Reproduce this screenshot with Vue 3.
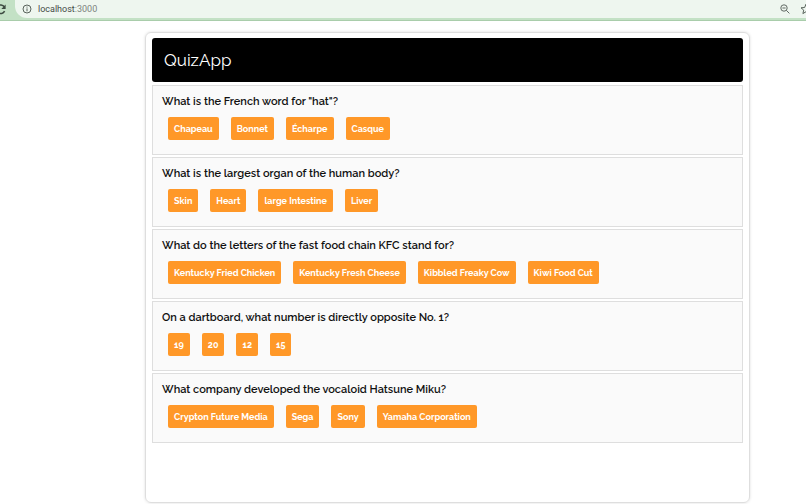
<template>
  <div class="page">
    <header class="browser">
      <button class="icon-button reload" aria-label="Reload">
        <svg width="12" height="14" viewBox="0 0 12 14">
          <path d="M9.6 9.2A4.3 4.3 0 1 1 9.3 4.8" fill="none" stroke="#3c4a40" stroke-width="1.5" />
          <path d="M10.6 2.6V6.9H6.4Z" fill="#3c4a40" />
        </svg>
      </button>
      <div class="address">
        <svg width="10" height="10" viewBox="0 0 10 10">
          <circle cx="5" cy="5" r="4" fill="none" stroke="#59635c" />
          <path d="M5 4.4V7.3M5 2.6V3.6" stroke="#59635c" />
        </svg>
        <span class="url">localhost<span class="port">:3000</span></span>
        <button class="icon-button zoom" aria-label="Zoom">
          <svg width="10" height="10" viewBox="0 0 10 10">
            <circle cx="4" cy="4" r="3.2" fill="none" stroke="#626b65" />
            <path d="M2.4 4H5.6M6.3 6.3L9.4 9.4" stroke="#626b65" />
          </svg>
        </button>
        <button class="icon-button star" aria-label="Bookmark">
          <svg width="12" height="12" viewBox="0 0 12 12">
            <path d="M6 1.2L7.4 4.5L11 4.8L8.3 7.1L9.1 10.6L6 8.7L2.9 10.6L3.7 7.1L1 4.8L4.6 4.5Z" fill="none" stroke="#59635c" />
          </svg>
        </button>
      </div>
    </header>

    <main class="container">
      <h1 class="title">QuizApp</h1>
      <section v-for="item in questions" :key="item.question" class="question">
        <h2 class="text">{{ item.question }}</h2>
        <div class="answers">
          <button
            v-for="answer in item.answers"
            :key="answer"
            class="answer"
            @click="select(item, answer)"
          >{{ answer }}</button>
        </div>
      </section>
    </main>
  </div>
</template>

<script setup>
import { ref } from 'vue';

const questions = ref([
  {
    question: 'What is the French word for "hat"?',
    answers: ['Chapeau', 'Bonnet', 'Écharpe', 'Casque'],
    selected: ''
  },
  {
    question: 'What is the largest organ of the human body?',
    answers: ['Skin', 'Heart', 'large Intestine', 'Liver'],
    selected: ''
  },
  {
    question: 'What do the letters of the fast food chain KFC stand for?',
    answers: ['Kentucky Fried Chicken', 'Kentucky Fresh Cheese', 'Kibbled Freaky Cow', 'Kiwi Food Cut'],
    selected: ''
  },
  {
    question: 'On a dartboard, what number is directly opposite No. 1?',
    answers: ['19', '20', '12', '15'],
    selected: ''
  },
  {
    question: 'What company developed the vocaloid Hatsune Miku?',
    answers: ['Crypton Future Media', 'Sega', 'Sony', 'Yamaha Corporation'],
    selected: ''
  }
]);

// remember the picked answer
const select = (item, answer) => {
  item.selected = answer;
};
</script>

<style>
body {
  margin: 0;
  background: #fff;
}
</style>

<style scoped>
* {
  box-sizing: border-box;
}
.page {
  display: flex;
  flex-direction: column;
  min-height: 100vh;
  overflow: hidden;
  font-family: Raleway, Lato, sans-serif;
}
.browser {
  display: flex;
  height: 21px;
  padding-bottom: 2px;
  background: #c3e1c5;
  border-bottom: 1px solid #a9cdab;
}
.icon-button {
  display: flex;
  flex: none;
  align-items: center;
  padding: 0;
  border: 0;
  background: none;
}
.reload {
  justify-content: flex-end;
  width: 15px;
  margin-left: -8px;
}
.address {
  display: flex;
  flex: 1;
  align-items: center;
  gap: 6px;
  min-width: 0;
  margin-left: 8px;
  padding-left: 7px;
  background: #eef6ef;
  border-radius: 0 0 0 12px;
}
.url {
  color: #444b46;
  font: 9px/12px Roboto, sans-serif;
}
.port {
  color: #7c847e;
}
.zoom {
  margin-left: auto;
}
.star {
  margin: 0 -6px 0 4px;
}
.container {
  display: flex;
  flex: 1;
  flex-direction: column;
  gap: 2px;
  width: 75%;
  margin: 11px 0 1px 18%;
  padding: 5px 6px;
  border: 1px solid #dedede;
  border-radius: 6px;
  box-shadow: 0 0 3px #ddd;
}
.title {
  margin: 0 0 1px;
  padding: 10px 12px;
  border-radius: 3px;
  background: #000;
  color: #fff;
  font-size: 17px;
  font-weight: 400;
  line-height: 24px;
}
.question {
  min-height: 70px;
  padding: 8px 9px;
  border: 1px solid #dedede;
  background: #fafafa;
}
.text {
  margin: 0;
  color: #111;
  font-size: 11px;
  font-weight: 600;
  line-height: 16px;
}
.answers {
  display: flex;
  flex-wrap: wrap;
  gap: 12px;
  padding: 7px 6px 0;
}
.answer {
  height: 23px;
  padding: 0 6px;
  border: 0;
  border-radius: 2px;
  background: #ff9828;
  color: #fff;
  font-family: inherit;
  font-size: 9px;
  font-weight: 700;
  line-height: 12px;
  cursor: pointer;
}
</style>
